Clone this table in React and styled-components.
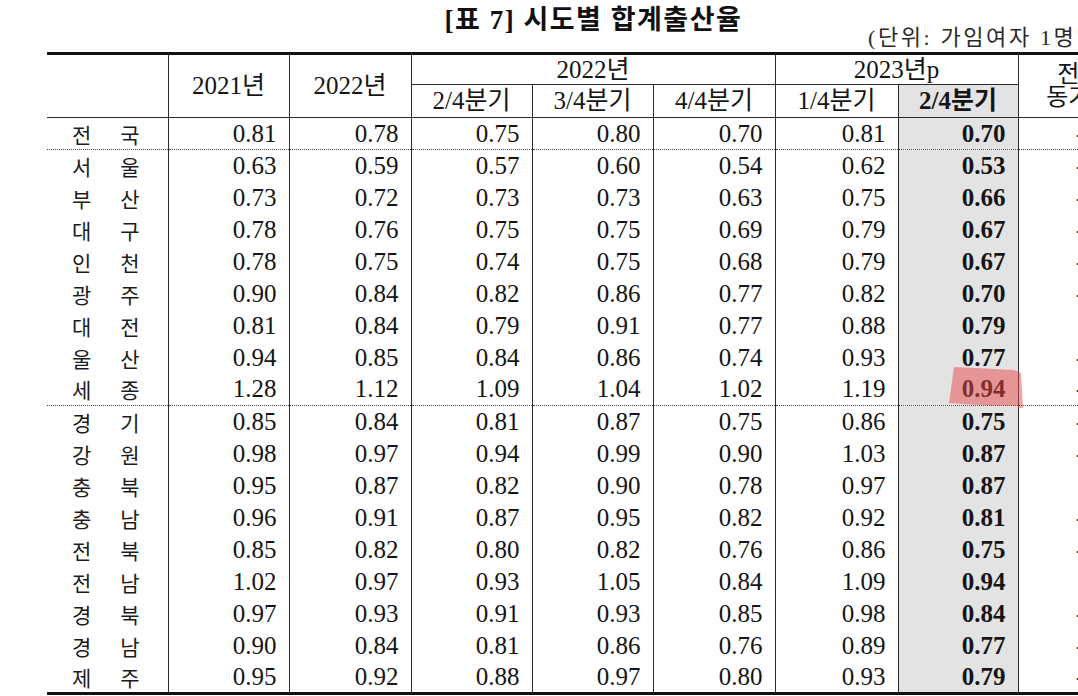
import React from "react";
import styled, { createGlobalStyle } from "styled-components";

const GlobalStyle = createGlobalStyle`
  body {
    margin: 0;
    background: #ffffff;
  }
`;

const Page = styled.div`
  width: 1078px;
  height: 696px;
  overflow: hidden;
  background: #ffffff;
  color: #151515;
  font-family: "Liberation Serif", "Noto Sans CJK KR", serif;
`;

const Caption = styled.div`
  width: 1093px;
  margin-left: 47px;
  display: flex;
  flex-direction: column;
`;

const Title = styled.div`
  padding-top: 5px;
  height: 30px;
  line-height: 30px;
  text-align: center;
  font-size: 27px;
  letter-spacing: 1.5px;
  font-weight: 700;
  color: #111;
`;

const Unit = styled.div`
  margin-top: -8px;
  padding-left: 821px;
  height: 25px;
  line-height: 22px;
  font-size: 22px;
  letter-spacing: 2.6px;
  white-space: nowrap;
  color: #2a2a2a;
`;

const Table = styled.table`
  margin-left: 47px;
  border-collapse: collapse;
  table-layout: fixed;
  width: 1093px;
`;

const HeadRow = styled.tr`
  height: ${(p) => p.$h}px;
`;

const HeadCell = styled.th`
  padding: 0;
  font-size: 25px;
  font-weight: ${(p) => (p.$bold ? 700 : 400)};
  text-align: center;
  vertical-align: middle;
  line-height: 26px;
  white-space: nowrap;
  background: ${(p) => (p.$shade ? "#e3e3e3" : "transparent")};
  border-left: ${(p) => (p.$first ? "none" : "1px solid #2b2b2b")};
  border-top: ${(p) => (p.$top ? "3px solid #111" : "none")};
  border-bottom: ${(p) => (p.$under ? "1px solid #2b2b2b" : "none")};
`;

const TwoLine = styled.span`
  display: block;
  font-size: 24px;
  line-height: 23px;
`;

const Row = styled.tr`
  height: 32px;
`;

const LabelCell = styled.td`
  padding: 0 28px 0 25px;
  border-bottom: ${(p) =>
    p.$last ? "3px solid #111" : p.$dotted ? "1px dotted #444" : "none"};
`;

const LabelChars = styled.div`
  display: flex;
  justify-content: space-between;
  font-family: "Noto Sans CJK KR", sans-serif;
  font-size: 21px;
  line-height: 26px;
  color: #1c1c1c;
`;

const NumCell = styled.td`
  position: relative;
  padding: 0 12px 0 0;
  text-align: right;
  font-size: 25px;
  line-height: 28px;
  font-weight: ${(p) => (p.$bold ? 700 : 400)};
  white-space: nowrap;
  background: ${(p) => (p.$shade ? "#e3e3e3" : "transparent")};
  border-left: 1px solid #2b2b2b;
  border-bottom: ${(p) =>
    p.$last ? "3px solid #111" : p.$dotted ? "1px dotted #444" : "none"};
`;

const Mark = styled.svg`
  position: absolute;
  left: 48px;
  top: -9px;
  width: 80px;
  height: 46px;
  pointer-events: none;
`;

const colWidths = [121, 121, 122, 121, 121, 122, 123, 120, 122];

const rows = [
  ["전", "국", ["0.81", "0.78", "0.75", "0.80", "0.70", "0.81", "0.70"], "-0.05"],
  ["서", "울", ["0.63", "0.59", "0.57", "0.60", "0.54", "0.62", "0.53"], "-0.04"],
  ["부", "산", ["0.73", "0.72", "0.73", "0.73", "0.63", "0.75", "0.66"], "-0.07"],
  ["대", "구", ["0.78", "0.76", "0.75", "0.75", "0.69", "0.79", "0.67"], "-0.08"],
  ["인", "천", ["0.78", "0.75", "0.74", "0.75", "0.68", "0.79", "0.67"], "-0.07"],
  ["광", "주", ["0.90", "0.84", "0.82", "0.86", "0.77", "0.82", "0.70"], "-0.12"],
  ["대", "전", ["0.81", "0.84", "0.79", "0.91", "0.77", "0.88", "0.79"], "0.00"],
  ["울", "산", ["0.94", "0.85", "0.84", "0.86", "0.74", "0.93", "0.77"], "-0.07"],
  ["세", "종", ["1.28", "1.12", "1.09", "1.04", "1.02", "1.19", "0.94"], "-0.15"],
  ["경", "기", ["0.85", "0.84", "0.81", "0.87", "0.75", "0.86", "0.75"], "-0.06"],
  ["강", "원", ["0.98", "0.97", "0.94", "0.99", "0.90", "1.03", "0.87"], "-0.07"],
  ["충", "북", ["0.95", "0.87", "0.82", "0.90", "0.78", "0.97", "0.87"], "0.05"],
  ["충", "남", ["0.96", "0.91", "0.87", "0.95", "0.82", "0.92", "0.81"], "-0.06"],
  ["전", "북", ["0.85", "0.82", "0.80", "0.82", "0.76", "0.86", "0.75"], "-0.05"],
  ["전", "남", ["1.02", "0.97", "0.93", "1.05", "0.84", "1.09", "0.94"], "0.01"],
  ["경", "북", ["0.97", "0.93", "0.91", "0.93", "0.85", "0.98", "0.84"], "-0.07"],
  ["경", "남", ["0.90", "0.84", "0.81", "0.86", "0.76", "0.89", "0.77"], "-0.04"],
  ["제", "주", ["0.95", "0.92", "0.88", "0.97", "0.80", "0.93", "0.79"], "-0.09"],
];

// rows followed by a dotted rule
const dottedAfter = [0, 8];
// 세종 row gets the red marker over the latest quarter
const markedRow = 8;

const App = () => {
  return (
    <Page>
      <GlobalStyle />
      <Caption>
        <Title>[표 7] 시도별 합계출산율</Title>
        <Unit>(단위: 가임여자 1명당 명)</Unit>
      </Caption>
      <Table>
        <colgroup>
          {colWidths.map((w, i) => (
            <col key={i} style={{ width: w }} />
          ))}
        </colgroup>
        <thead>
          <HeadRow $h={31}>
            <HeadCell rowSpan={2} $first $top $under />
            <HeadCell rowSpan={2} $top $under>2021년</HeadCell>
            <HeadCell rowSpan={2} $top $under>2022년</HeadCell>
            <HeadCell colSpan={3} $top $under>2022년</HeadCell>
            <HeadCell colSpan={2} $top $under>2023년p</HeadCell>
            <HeadCell rowSpan={2} $top $under>
              <TwoLine>전년</TwoLine>
              <TwoLine>동기비</TwoLine>
            </HeadCell>
          </HeadRow>
          <HeadRow $h={33}>
            <HeadCell $under>2/4분기</HeadCell>
            <HeadCell $under>3/4분기</HeadCell>
            <HeadCell $under>4/4분기</HeadCell>
            <HeadCell $under>1/4분기</HeadCell>
            <HeadCell $under $shade $bold>2/4분기</HeadCell>
          </HeadRow>
        </thead>
        <tbody>
          {rows.map(([a, b, vals, diff], i) => {
            const dotted = dottedAfter.includes(i);
            const last = i === rows.length - 1;
            return (
              <Row key={i}>
                <LabelCell $dotted={dotted} $last={last}>
                  <LabelChars>
                    <span>{a}</span>
                    <span>{b}</span>
                  </LabelChars>
                </LabelCell>
                {vals.map((v, j) => {
                  const latest = j === vals.length - 1;
                  return (
                    <NumCell
                      key={j}
                      $shade={latest}
                      $bold={latest}
                      $dotted={dotted}
                      $last={last}
                    >
                      {v}
                      {latest && i === markedRow && (
                        <Mark viewBox="0 0 80 46">
                          <polygon
                            points="7,2 67,5 74,8 76,43 2,38"
                            fill="rgba(232, 72, 72, 0.5)"
                          />
                        </Mark>
                      )}
                    </NumCell>
                  );
                })}
                <NumCell $dotted={dotted} $last={last}>
                  {diff}
                </NumCell>
              </Row>
            );
          })}
        </tbody>
      </Table>
    </Page>
  );
};

export default App;
